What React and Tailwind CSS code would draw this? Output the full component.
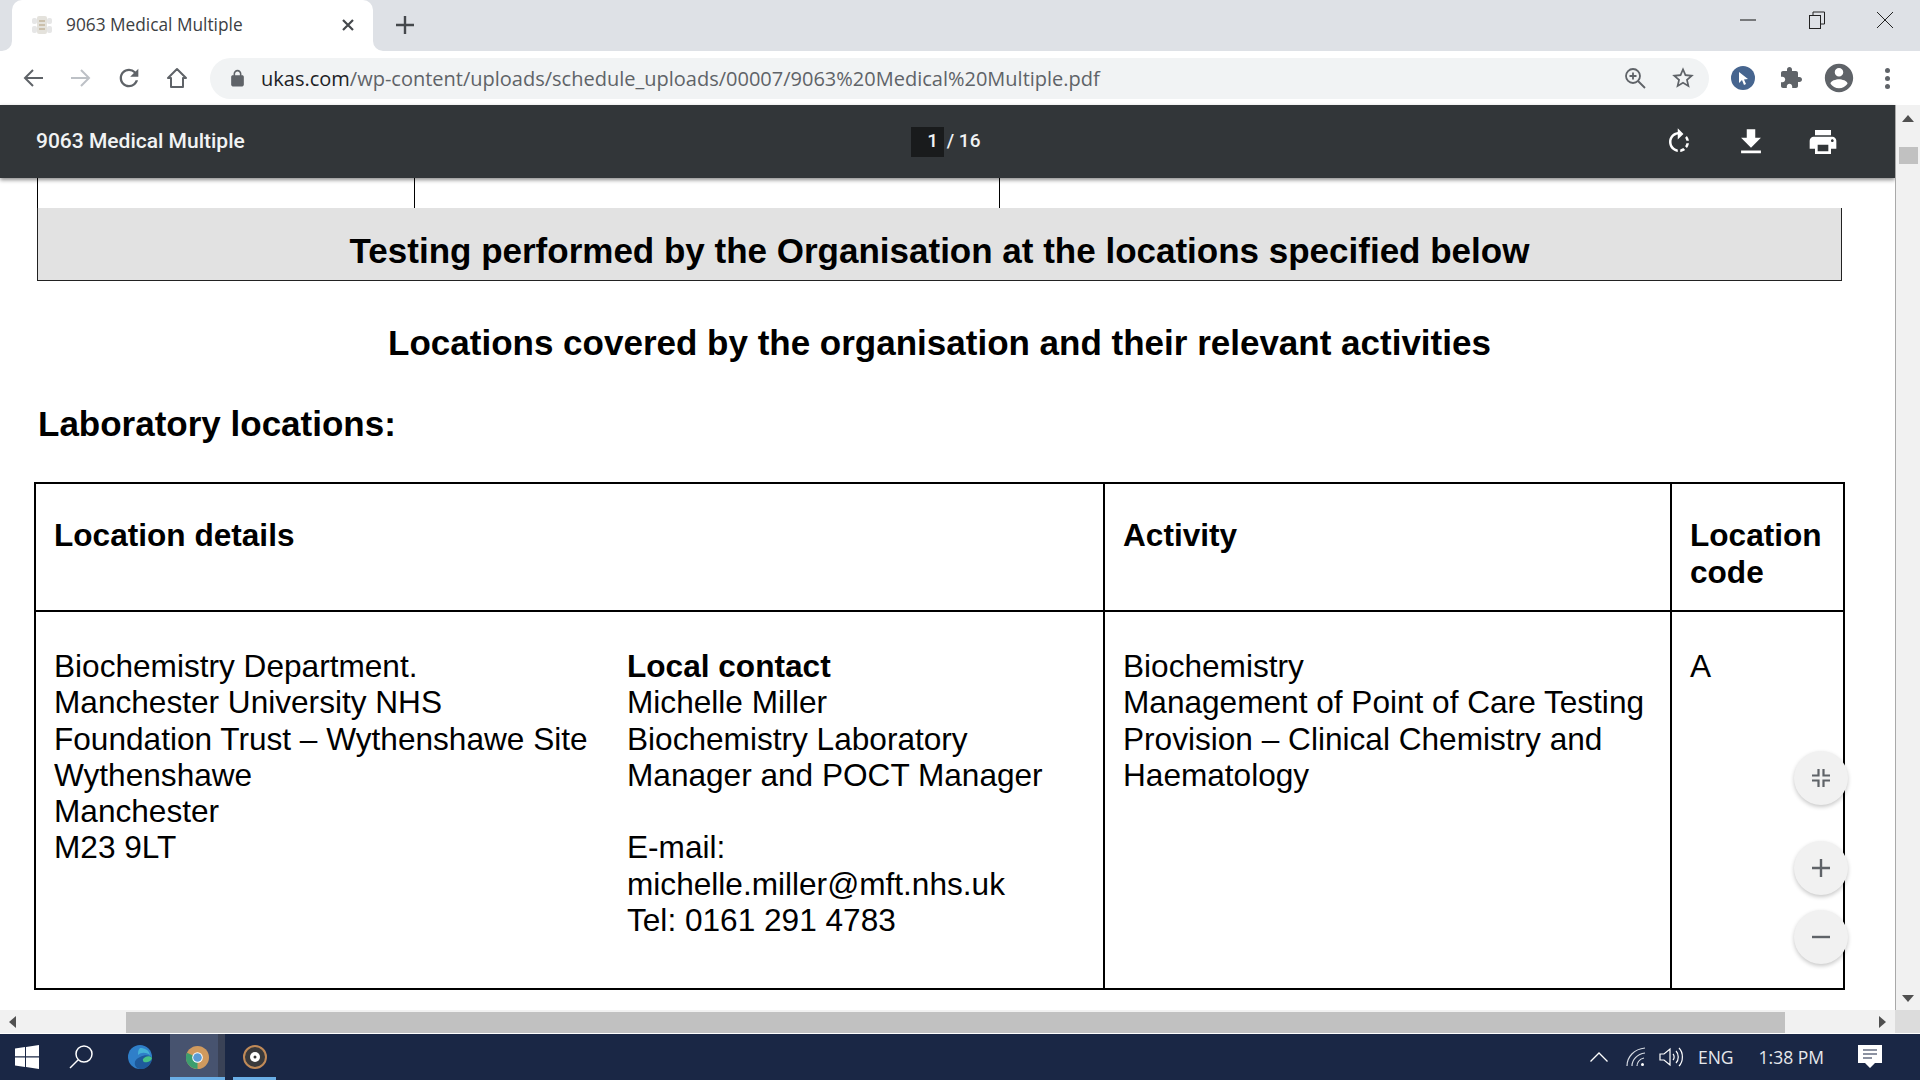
const P = {
  print: 'M19 8H5c-1.66 0-3 1.34-3 3v6h4v4h12v-4h4v-6c0-1.66-1.34-3-3-3zm-3 11H8v-5h8v5zm3-7c-.55 0-1-.45-1-1s.45-1 1-1 1 .45 1 1-.45 1-1 1zm-1-9H6v4h12V3z',
  download: 'M19 9h-4V3H9v6H5l7 7 7-7zM5 18v2h14v-2H5z',
  rotate: 'M15.55 5.55L11 1v3.07C7.06 4.56 4 7.92 4 12s3.05 7.44 7 7.93v-2.02c-2.84-.48-5-2.94-5-5.91s2.16-5.43 5-5.91V10l4.55-4.45zM19.93 11c-.17-1.39-.72-2.73-1.62-3.89l-1.42 1.42c.54.75.88 1.6 1.02 2.47h2.02zM13 17.9v2.02c1.39-.17 2.74-.71 3.9-1.61l-1.44-1.44c-.75.54-1.59.89-2.46 1.03zm3.89-2.42l1.42 1.41c.9-1.16 1.45-2.5 1.62-3.89h-2.02c-.14.87-.48 1.72-1.02 2.48z',
  reload: 'M17.65 6.35A7.958 7.958 0 0012 4c-4.42 0-7.99 3.58-7.99 8s3.57 8 7.99 8c3.73 0 6.84-2.55 7.73-6h-2.08A5.99 5.99 0 0112 18c-3.31 0-6-2.69-6-6s2.69-6 6-6c1.66 0 3.14.69 4.22 1.78L13 11h7V4l-2.35 2.35z',
  lock: 'M18 8h-1V6c0-2.76-2.24-5-5-5S7 3.24 7 6v2H6c-1.1 0-2 .9-2 2v10c0 1.1.9 2 2 2h12c1.1 0 2-.9 2-2V10c0-1.1-.9-2-2-2zM9 6c0-1.66 1.34-3 3-3s3 1.34 3 3v2H9V6z',
  puzzle: 'M20.5 11H19V7c0-1.1-.9-2-2-2h-4V3.5C13 2.12 11.88 1 10.5 1S8 2.12 8 3.5V5H4c-1.1 0-1.99.9-1.99 2v3.8H3.5c1.49 0 2.7 1.21 2.7 2.7s-1.21 2.7-2.7 2.7H2V20c0 1.1.9 2 2 2h3.8v-1.5c0-1.49 1.21-2.7 2.7-2.7 1.49 0 2.7 1.21 2.7 2.7V22H17c1.1 0 2-.9 2-2v-4h1.5c1.38 0 2.5-1.12 2.5-2.5S21.88 11 20.5 11z',
  account: 'M12 2C6.48 2 2 6.48 2 12s4.48 10 10 10 10-4.48 10-10S17.52 2 12 2zm0 3c1.66 0 3 1.34 3 3s-1.34 3-3 3-3-1.34-3-3 1.34-3 3-3zm0 14.2c-2.5 0-4.71-1.28-6-3.22.03-1.99 4-3.08 6-3.08 1.99 0 5.97 1.09 6 3.08-1.29 1.94-3.5 3.22-6 3.22z',
  star: 'M22 9.24l-7.19-.62L12 2 9.19 8.63 2 9.24l5.46 4.73L5.82 21 12 17.27 18.18 21l-1.64-7.03L22 9.24zM12 15.4l-3.76 2.27 1-4.28-3.32-2.88 4.38-.38L12 6.1l1.71 4.04 4.38.38-3.32 2.88 1 4.28L12 15.4z',
};

function Ico({ d, size = 24, className = '' }) {
  return (
    <svg width={size} height={size} viewBox="0 0 24 24" fill="currentColor" className={className}>
      <path d={d} />
    </svg>
  );
}

function TabStrip() {
  return (
    <div className="flex h-[51px] bg-[#dee1e6] shrink-0">
      <div className="relative ml-[12px] w-[361px] h-[51px] bg-white rounded-t-[10px] flex items-center pb-[2px]">
        <svg width="10" height="10" viewBox="0 0 10 10" className="absolute -left-[10px] bottom-0"><path d="M10 0v10H0a10 10 0 0010-10z" fill="#fff" /></svg>
        <svg width="10" height="10" viewBox="0 0 10 10" className="absolute -right-[10px] bottom-0"><path d="M0 0v10h10A10 10 0 010 0z" fill="#fff" /></svg>
        <svg width="22" height="20" viewBox="0 0 22 20" className="ml-[19px] mr-[13px]">
          <rect x="6" y="1" width="10" height="18" rx="2" fill="#e4e2dc" />
          <rect x="1" y="3" width="5" height="6" rx="2" fill="#e6e6e6" />
          <rect x="16" y="3" width="5" height="6" rx="2" fill="#e6e6e6" />
          <rect x="1" y="11" width="5" height="7" rx="2" fill="#e6e6e6" />
          <rect x="16" y="11" width="5" height="7" rx="2" fill="#e6e6e6" />
          <path d="M8 6h6M8 10h6M8 14h6" stroke="#c2b59c" strokeWidth="1.4" />
        </svg>
        <span className="font-['Open_Sans',sans-serif] text-[17.3px] text-[#3c4043]">9063 Medical Multiple</span>
        <svg width="14" height="14" viewBox="0 0 14 14" className="ml-auto mr-[18px]"><path d="M2 2l10 10M12 2L2 12" stroke="#45484c" strokeWidth="2.2" /></svg>
      </div>
      <div className="ml-[20px] w-[24px] flex items-center justify-center pb-[2px]">
        <svg width="18" height="18" viewBox="0 0 18 18"><path d="M9 0v18M0 9h18" stroke="#45484c" strokeWidth="2.4" /></svg>
      </div>
      <div className="ml-auto flex items-start pt-[9px] text-[#222]">
        <div className="w-[69px] h-[22px] flex items-center justify-center">
          <svg width="16" height="2" viewBox="0 0 16 2"><path d="M0 1h16" stroke="#111" strokeWidth="1" /></svg>
        </div>
        <div className="w-[69px] h-[22px] flex items-center justify-center">
          <svg width="16" height="18" viewBox="0 0 16 18" fill="none" stroke="#222" strokeWidth="1"><rect x="0.5" y="4.5" width="11" height="13" /><path d="M4 4V1h11.5v12H12" /></svg>
        </div>
        <div className="w-[69px] h-[22px] pr-[2px] flex items-center justify-center">
          <svg width="18" height="18" viewBox="0 0 18 18"><path d="M1 1l16 16M17 1L1 17" stroke="#222" strokeWidth="1" /></svg>
        </div>
      </div>
    </div>
  );
}

function Toolbar() {
  return (
    <div className="flex items-center h-[54px] pl-[9px] bg-white shrink-0 text-[#5f6368]">
      <div className="w-[48px] flex justify-center">
        <svg width="20" height="18" viewBox="0 0 20 18" fill="none" stroke="#5f6368" strokeWidth="2"><path d="M20 9H2M10 1L2 9l8 8" /></svg>
      </div>
      <div className="w-[48px] flex justify-center">
        <svg width="20" height="18" viewBox="0 0 20 18" fill="none" stroke="#bdc1c6" strokeWidth="2"><path d="M0 9h18M10 1l8 8-8 8" /></svg>
      </div>
      <div className="w-[48px] flex justify-center"><Ico d={P.reload} size={28} /></div>
      <div className="w-[48px] flex justify-center">
        <svg width="22" height="22" viewBox="0 0 22 22" fill="none" stroke="#5f6368" strokeWidth="2"><path d="M11 2L2 11h3v9h12v-9h3z" strokeLinejoin="round" /></svg>
      </div>
      <div className="ml-[9px] w-[1499px] h-[41px] rounded-full bg-[#f1f3f4] flex items-center">
        <Ico d={P.lock} size={19} className="ml-[18px] mr-[14px]" />
        <span className="font-['Open_Sans',sans-serif] text-[20px] text-[#5f6368] pt-[1px]"><span className="text-[#202124]">ukas.com</span>/wp-content/uploads/schedule_uploads/00007/9063%20Medical%20Multiple.pdf</span>
        <svg width="22" height="22" viewBox="0 0 22 22" fill="none" stroke="#5f6368" strokeWidth="1.8" className="ml-auto mr-[24px]"><circle cx="9" cy="9" r="7" /><path d="M14 14l7 7M9 5.5v7M5.5 9h7" /></svg>
        <Ico d={P.star} size={26} className="mr-[13px]" />
      </div>
      <div className="ml-[10px] w-[48px] flex justify-center">
        <div className="w-[24px] h-[24px] rounded-full bg-[#46658f] flex items-center justify-center">
          <svg width="12" height="14" viewBox="0 0 12 14"><path d="M2 1l9 7-4 .5L9 13l-2 1-2-5-3 3z" fill="#fff" /></svg>
        </div>
      </div>
      <div className="w-[48px] flex justify-center"><Ico d={P.puzzle} size={24} /></div>
      <div className="w-[48px] flex justify-center"><Ico d={P.account} size={34} /></div>
      <div className="w-[48px] flex flex-col items-center gap-[3px]">
        <div className="w-[5px] h-[5px] rounded-full bg-[#5f6368]" />
        <div className="w-[5px] h-[5px] rounded-full bg-[#5f6368]" />
        <div className="w-[5px] h-[5px] rounded-full bg-[#5f6368]" />
      </div>
    </div>
  );
}

function PdfBar() {
  return (
    <div className="relative z-10 flex items-center h-[73px] bg-[#323639] text-white shadow-[0_2px_4px_rgba(0,0,0,0.45)] shrink-0">
      <div className="w-[911px] pl-[36px] pt-[1px] font-['Roboto',sans-serif] font-medium text-[21px] text-[#f1f3f4]">9063 Medical Multiple</div>
      <div className="flex items-center font-['Roboto',sans-serif] font-medium text-[19px] text-[#f1f3f4]">
        <span className="w-[33px] h-[30px] bg-[#191b1c] flex items-center justify-end pr-[6px]">1</span>
        <span className="whitespace-pre -ml-[2px]"> / 16</span>
      </div>
      <div className="ml-auto flex items-center pr-[36px]">
        <div className="w-[72px] flex justify-center"><Ico d={P.rotate} size={30} /></div>
        <div className="w-[72px] flex justify-center"><Ico d={P.download} size={34} /></div>
        <div className="w-[72px] flex justify-center"><Ico d={P.print} size={32} /></div>
      </div>
    </div>
  );
}

function Fab({ children, className = '' }) {
  return (
    <div className={`absolute left-[1794px] w-[54px] h-[54px] rounded-full bg-[#f1f1f1] shadow-[0_2px_4px_rgba(0,0,0,0.22)] flex items-center justify-center ${className}`}>
      {children}
    </div>
  );
}

function PdfPage() {
  const lines = (arr) => arr.map((t, i) => <div key={i} className="h-[36.3px]">{t}</div>);
  return (
    <div className="relative flex-1 overflow-hidden bg-white font-['Liberation_Sans',sans-serif] text-black">
      {/* top of the previous table, cut off by the toolbar */}
      <div className="ml-[37px] w-[1805px] flex h-[30px] border-l border-black">
        <div className="w-[377px] border-r border-black" />
        <div className="w-[585px] border-r border-black" />
      </div>
      <div className="ml-[37px] w-[1805px] h-[73px] bg-[#e2e2e2] border-x border-b border-[#222] flex items-center justify-center text-[35px] font-bold pt-[14px]">
        Testing performed by the Organisation at the locations specified below
      </div>
      <div className="mt-[41px] text-center text-[35px] font-bold leading-[42px] pr-[16px]">Locations covered by the organisation and their relevant activities</div>
      <div className="mt-[39px] ml-[38px] text-[35px] font-bold leading-[42px]">Laboratory locations:</div>

      <div className="mt-[37px] ml-[34px] w-[1811px] h-[508px] border-2 border-black grid grid-cols-[1069px_1fr_171px] grid-rows-[128px_1fr] text-[31.6px] leading-[36.4px]">
        <div className="border-r-2 border-b-2 border-black pl-[18px] pt-[33px] font-bold">Location details</div>
        <div className="border-r-2 border-b-2 border-black pl-[18px] pt-[33px] font-bold">Activity</div>
        <div className="border-b-2 border-black pl-[18px] pt-[33px] font-bold leading-[37px]">Location<br />code</div>
        <div className="border-r-2 border-black pl-[18px] pt-[36px] flex">
          <div className="w-[573px]">
            {lines(['Biochemistry Department.', 'Manchester University NHS', 'Foundation Trust – Wythenshawe Site', 'Wythenshawe', 'Manchester', 'M23 9LT'])}
          </div>
          <div>
            <div className="h-[36.3px] font-bold">Local contact</div>
            {lines(['Michelle Miller', 'Biochemistry Laboratory', 'Manager and POCT Manager', '', 'E-mail:', 'michelle.miller@mft.nhs.uk', 'Tel: 0161 291 4783'])}
          </div>
        </div>
        <div className="border-r-2 border-black pl-[18px] pt-[36px]">
          {lines(['Biochemistry', 'Management of Point of Care Testing', 'Provision – Clinical Chemistry and', 'Haematology'])}
        </div>
        <div className="pl-[18px] pt-[36px]">A</div>
      </div>

      <Fab className="top-[573px]">
        <svg width="18" height="18" viewBox="0 0 18 18" fill="none" stroke="#5f6368" strokeWidth="2.2"><path d="M6.500 0v6.500H0M11.500 0v6.500H18M6.500 18v-6.500H0M11.500 18v-6.500H18" /></svg>
      </Fab>
      <Fab className="top-[663px]">
        <svg width="18" height="18" viewBox="0 0 18 18" stroke="#5f6368" strokeWidth="2.4"><path d="M9 0v18M0 9h18" /></svg>
      </Fab>
      <Fab className="top-[732px]">
        <svg width="18" height="4" viewBox="0 0 18 4" stroke="#5f6368" strokeWidth="2.4"><path d="M0 2h18" /></svg>
      </Fab>
    </div>
  );
}

function VScroll() {
  return (
    <div className="relative z-20 w-[25px] bg-[#f1f1f1] border-l border-[#a9a9a9] flex flex-col items-center shrink-0">
      <svg width="12" height="7" viewBox="0 0 12 7" className="mt-[10px]"><path d="M6 0l6 7H0z" fill="#505050" /></svg>
      <div className="mt-[25px] w-[19px] h-[17px] bg-[#c1c1c1]" />
      <svg width="12" height="7" viewBox="0 0 12 7" className="mt-auto mb-[8px]"><path d="M0 0h12L6 7z" fill="#505050" /></svg>
    </div>
  );
}

function HScroll() {
  return (
    <div className="flex h-[24px] border-b border-white shrink-0">
      <div className="flex-1 bg-[#f1f1f1] flex items-center">
        <svg width="7" height="12" viewBox="0 0 7 12" className="ml-[9px]"><path d="M7 0v12L0 6z" fill="#505050" /></svg>
        <div className="ml-[110px] w-[1659px] h-[21px] mt-[1px] bg-[#c1c1c1]" />
        <svg width="7" height="12" viewBox="0 0 7 12" className="ml-auto mr-[9px]"><path d="M0 0v12l7-6z" fill="#505050" /></svg>
      </div>
      <div className="w-[25px] bg-[#dcdcdc]" />
    </div>
  );
}

function Taskbar() {
  return (
    <div className="flex items-center h-[46px] bg-[#1a2745] text-white font-['Open_Sans',sans-serif] shrink-0">
      <svg width="24" height="24" viewBox="0 0 24 24" className="ml-[15px]" fill="#fff"><path d="M0 3.5l10-1.4v9.2H0zM11 2l13-2v11.3H11zM0 12.4h10v9.5L0 20.5zM11 12.4h13V24l-13-2z" /></svg>
      <svg width="24" height="24" viewBox="0 0 24 24" className="ml-[30px]" fill="none" stroke="#fff" strokeWidth="1.5"><circle cx="15" cy="9" r="8" /><path d="M9 15L1 23" /></svg>
      <svg width="24" height="24" viewBox="0 0 24 24" className="ml-[35px]">
        <circle cx="12" cy="12" r="12" fill="#2f7fc9" />
        <path d="M12 12c5-3 11-2 12 1 0 6-5 11-11 11-7 0-9-9-1-12z" fill="#1e5a9c" />
        <path d="M15 14c2-3 7-4 9-1-1 4-6 5-8 4-1-.7-1.500-2-1-3z" fill="#46c187" />
        <path d="M12 3c5 0 9 2 10 7-4-3-9-3-12 0 0-3 0-5 2-7z" fill="#45b1d6" />
      </svg>
      <div className="ml-[18px] relative w-[55px] h-[46px] bg-[#47536f] flex items-center pl-[16px]">
        <svg width="23" height="23" viewBox="0 0 24 24">
          <circle cx="12" cy="12" r="12" fill="#d09a5e" />
          <path d="M12 12L1 7A12 12 0 0012 24z" fill="#3d9e6e" />
          <circle cx="12" cy="12" r="5.500" fill="#fff" />
          <circle cx="12" cy="12" r="4.500" fill="#5b9bd5" />
        </svg>
        <div className="absolute right-0 top-0 w-[7px] h-[46px] bg-[#3a4256]" />
        <div className="absolute left-0 bottom-0 w-[55px] h-[3px] bg-[#6aaee6]" />
      </div>
      <div className="relative ml-[8px] w-[43px] h-[46px] flex items-center justify-center">
        <svg width="24" height="24" viewBox="0 0 24 24">
          <circle cx="12" cy="12" r="11" fill="#3a3a3c" stroke="#c08a58" strokeWidth="2" />
          <circle cx="12" cy="12" r="5" fill="#fff" />
          <circle cx="12" cy="12" r="1.500" fill="#333" />
        </svg>
        <div className="absolute left-0 bottom-0 w-[43px] h-[3px] bg-[#6aaee6]" />
      </div>

      <svg width="18" height="10" viewBox="0 0 18 10" className="ml-auto" fill="none" stroke="#fff" strokeWidth="1.3"><path d="M0.5 9.500L9 1l8.500 8.500" /></svg>
      <svg width="20" height="20" viewBox="0 0 20 20" className="ml-[18px]" fill="none" stroke="#d8dce4" strokeWidth="1.2"><path d="M1 19C1 10 8 2 19 1M6 19c0-6 5-12 13-13M11 19c0-3 2-7 7-8" /><circle cx="16.500" cy="17.500" r="1.500" fill="#fff" stroke="none" /></svg>
      <svg width="24" height="20" viewBox="0 0 24 20" className="ml-[13px]" fill="none" stroke="#fff" strokeWidth="1.2"><path d="M1 7h4l6-5v16l-6-5H1zM14 7c1.500 1.500 1.500 4.500 0 6M17 4c3 3 3 9 0 12M20 1c4.500 4.500 4.500 13.500 0 18" /></svg>
      <span className="ml-[15px] text-[17.5px] text-[#e6e8ec]">ENG</span>
      <span className="ml-[25px] text-[17.5px] text-[#e6e8ec]">1:38 PM</span>
      <svg width="24" height="24" viewBox="0 0 24 24" className="ml-[34px] mr-[38px]"><path d="M0 0h24v18h-7l-5 5-5-5H0z" fill="#fff" /><path d="M5 5h14M5 9h14M5 13h9" stroke="#1a2745" strokeWidth="1.2" /></svg>
    </div>
  );
}

export default function App() {
  return (
    <div className="w-[1920px] h-[1080px] flex flex-col overflow-hidden bg-white">
      <TabStrip />
      <Toolbar />
      <div className="flex-1 flex min-h-0">
        <div className="flex-1 flex flex-col min-w-0">
          <PdfBar />
          <PdfPage />
        </div>
        <VScroll />
      </div>
      <HScroll />
      <Taskbar />
    </div>
  );
}
